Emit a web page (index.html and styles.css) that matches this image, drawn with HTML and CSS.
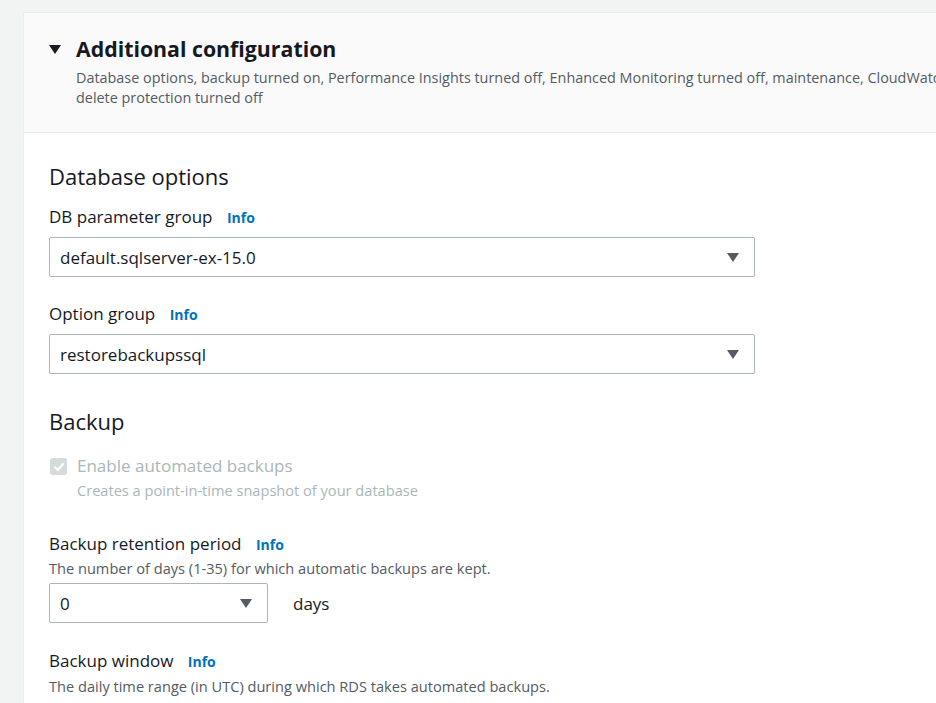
FILE: index.html
```html
<!DOCTYPE html>
<html>
<head>
<meta charset="utf-8">
<link rel="stylesheet" href="styles.css">
</head>
<body>
<div class="page">
  <section class="card">
    <header class="card-header">
      <div class="title-row">
        <span class="caret"></span>
        <h2 class="title">Additional configuration</h2>
      </div>
      <p class="desc">Database options, backup turned on, Performance Insights turned off, Enhanced Monitoring turned off, maintenance, CloudWatch Logs,<br>delete protection turned off</p>
    </header>
    <div class="card-body">
      <h3 class="section-title">Database options</h3>
      <div class="field">
        <div class="label">DB parameter group <a class="info">Info</a></div>
        <div class="select wide"><span>default.sqlserver-ex-15.0</span><span class="arrow"></span></div>
      </div>
      <div class="field">
        <div class="label">Option group <a class="info">Info</a></div>
        <div class="select wide"><span>restorebackupssql</span><span class="arrow"></span></div>
      </div>

      <h3 class="section-title backup-title">Backup</h3>
      <div class="checkbox-row">
        <span class="checkbox">
          <svg width="12" height="12" viewBox="0 0 12 12"><path d="M2 6.2 L4.8 9 L10 3" fill="none" stroke="#fff" stroke-width="2" stroke-linecap="round" stroke-linejoin="round"/></svg>
        </span>
        <div>
          <div class="check-label">Enable automated backups</div>
          <div class="check-desc">Creates a point-in-time snapshot of your database</div>
        </div>
      </div>

      <div class="field retention">
        <div class="label">Backup retention period <a class="info">Info</a></div>
        <div class="hint">The number of days (1-35) for which automatic backups are kept.</div>
        <div class="inline">
          <div class="select small"><span>0</span><span class="arrow"></span></div>
          <span class="unit">days</span>
        </div>
      </div>

      <div class="field window">
        <div class="label">Backup window <a class="info">Info</a></div>
        <div class="hint">The daily time range (in UTC) during which RDS takes automated backups.</div>
      </div>
    </div>
  </section>
</div>
</body>
</html>
```

FILE: styles.css
```css
html, body {
  margin: 0;
  padding: 0;
}
body {
  background: #f2f3f3;
  font-family: "Open Sans", "Liberation Sans", sans-serif;
  color: #16191f;
  overflow: hidden;
  width: 936px;
  height: 703px;
}
.page {
  padding: 12px 0 0 23px;
}
.card {
  width: 1150px;
  background: #fff;
  border: 1px solid #eaeded;
  border-right: none;
}
.card-header {
  background: #fafafa;
  border-bottom: 1px solid #eaeded;
  padding: 22px 25px 24px 25px;
}
.title-row {
  display: flex;
  align-items: center;
  gap: 15px;
}
.caret {
  width: 0;
  height: 0;
  border-left: 6px solid transparent;
  border-right: 6px solid transparent;
  border-top: 9px solid #16191f;
}
.title {
  margin: 0;
  font-size: 21.3px;
  font-weight: 700;
  line-height: 28px;
}
.desc {
  margin: 5px 0 0 27px;
  font-size: 14.4px;
  line-height: 20px;
  color: #545b64;
  white-space: nowrap;
}
.card-body {
  padding: 29px 25px 20px 25px;
}
.section-title {
  margin: 0 0 16px 0;
  font-size: 22px;
  font-weight: 400;
  line-height: 28px;
}
.backup-title {
  margin-top: 33px;
  margin-bottom: 20px;
}
.field {
  margin-bottom: 26px;
}
.label {
  font-size: 17px;
  line-height: 22px;
  margin-bottom: 8px;
}
.info {
  font-size: 14px;
  font-weight: 700;
  color: #0073bb;
  margin-left: 10px;
}
.select {
  box-sizing: border-box;
  height: 40px;
  border: 1px solid #aab7b8;
  border-radius: 2px;
  background: #fff;
  display: flex;
  align-items: center;
  justify-content: space-between;
  padding: 0 15px 0 10px;
  font-size: 17px;
}
.select.wide { width: 706px; }
.select.small { width: 219px; }
.arrow {
  width: 0;
  height: 0;
  border-left: 6px solid transparent;
  border-right: 6px solid transparent;
  border-top: 9px solid #545b64;
}
.checkbox-row {
  display: flex;
  gap: 10px;
  align-items: flex-start;
  margin-bottom: 33px;
}
.checkbox {
  width: 17px;
  height: 17px;
  border-radius: 3px;
  background: #d5dbdb;
  display: flex;
  align-items: center;
  justify-content: center;
  margin: 3px 0 0 1px;
}
.check-label {
  font-size: 17px;
  line-height: 22px;
  color: #aab7b8;
}
.check-desc {
  font-size: 14.6px;
  line-height: 20px;
  color: #aab7b8;
  margin-top: 3px;
}
.hint {
  font-size: 14.6px;
  line-height: 20px;
  color: #545b64;
  margin: -6px 0 5px 0;
}
.window .hint {
  margin-top: -5px;
}
.inline {
  display: flex;
  align-items: center;
  gap: 25px;
}
.unit {
  font-size: 17px;
}
.retention {
  margin-bottom: 27px;
}
```
